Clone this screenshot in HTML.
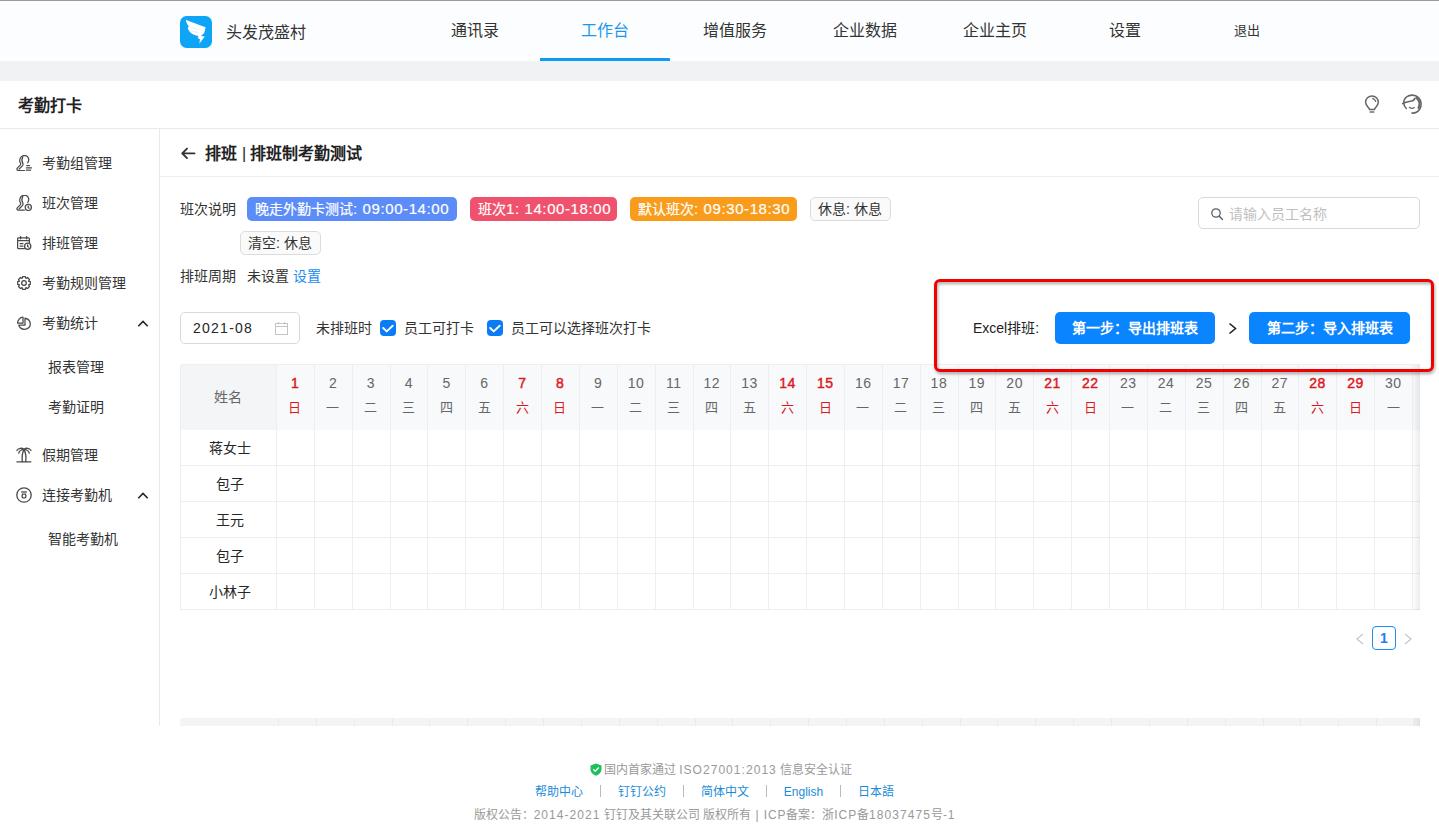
<!DOCTYPE html>
<html lang="zh-CN">
<head>
<meta charset="utf-8">
<style>
*{box-sizing:border-box;margin:0;padding:0}
html,body{width:1439px;height:837px;overflow:hidden;background:#fff}
body{position:relative;font-family:"Liberation Sans",sans-serif;color:#333;font-size:14px;white-space:nowrap}
.ic{position:absolute}
.abs{position:absolute;white-space:nowrap}
#topline{position:absolute;left:0;top:0;width:1439px;height:1px;background:#9a9a9a}
#hdr{position:absolute;left:0;top:1px;width:1439px;height:60px;background:#fcfdfe}
#band{position:absolute;left:0;top:61px;width:1439px;height:20px;background:#f1f2f4}
.nav{position:absolute;top:20px;font-size:16px;line-height:22px;color:#333;text-align:center;width:130px}
.nav.act{color:#1a97f0}
#navline{position:absolute;left:540px;top:58px;width:130px;height:3px;background:#0f9af5}
#orgname{position:absolute;left:226px;top:22px;font-size:16px;line-height:22px;color:#333}
#apptitle{position:absolute;left:18px;top:95px;font-size:16px;line-height:22px;font-weight:bold;color:#222}
#sep1{position:absolute;left:0;top:128px;width:1439px;height:1px;background:#e8e9eb}
#side{position:absolute;left:159px;top:129px;width:1px;height:597px;background:#e8e9eb}
.si{position:absolute;left:42px;font-size:14px;line-height:20px;color:#333}
.si2{position:absolute;left:48px;font-size:14px;line-height:20px;color:#333}
.caret{position:absolute;left:136px;width:12px;height:12px}
.sico{position:absolute;left:15px;width:18px;height:18px}
#ctitle{position:absolute;left:205px;top:143px;font-size:16px;line-height:22px;font-weight:bold;color:#222}
#sep2{position:absolute;left:160px;top:176px;width:1279px;height:1px;background:#eceef0}
.lbl{position:absolute;font-size:14px;line-height:20px;color:#333}
.d14{letter-spacing:.6px;font-size:15px}
.d12{letter-spacing:1.05px}
.e12{letter-spacing:.9px}
.tag{position:absolute;height:24px;border-radius:5px;font-size:14px;line-height:24px;color:#fff;padding:0 8px;-webkit-text-stroke:.2px #fff}
.tago{position:absolute;height:24px;border-radius:5px;font-size:14px;line-height:22px;color:#333;padding:0 7px;border:1px solid #dcdcdc;background:#fafafa}

#search{position:absolute;left:1198px;top:197px;width:222px;height:32px;border:1px solid #d9d9d9;border-radius:5px;background:#fff}
#search .ph{position:absolute;left:30px;top:6px;font-size:14px;line-height:20px;color:#bfbfbf}
#search svg{position:absolute;left:12px;top:10px}
#redbox{position:absolute;z-index:5;left:934px;top:279px;width:500px;height:93px;border:3px solid #f20000;border-radius:6px;filter:drop-shadow(1px 2px 1.5px rgba(0,0,0,.35))}
#datep{position:absolute;left:180px;top:312px;width:120px;height:32px;border:1px solid #d9d9d9;border-radius:5px;background:#fff}
#datep .v{position:absolute;left:12px;top:5px;font-size:14px;line-height:20px;color:#262626;letter-spacing:1.25px}
#datep svg{position:absolute;left:94px;top:9px}
.cb{position:absolute;top:320px;width:16px;height:16px;border-radius:4px;background:#0a7cf5}
.cb svg{position:absolute;left:2px;top:3px}
.btn{position:absolute;top:312px;height:32px;border-radius:5px;background:#0a84ff;color:#fff;font-size:14px;line-height:32px;text-align:center;font-weight:bold}
#tbl{position:absolute;left:180px;top:364px;width:1240px;height:246px;overflow:hidden;border-top-left-radius:4px}
#thbg{position:absolute;left:0;top:0;width:1240px;height:66px;background:#f8f9fa;border-top-left-radius:4px}
#thname{position:absolute;left:0;top:0;width:96px;height:66px;background:#f4f5f7;border-top-left-radius:4px;color:#666;font-size:14px;line-height:66px;text-align:center}
.dh{position:absolute;top:0;height:66px;text-align:center;color:#666;font-size:13px}
.dh .dn{position:absolute;left:0;right:0;top:10px;line-height:18px;font-size:14px;letter-spacing:.5px;text-indent:.5px}
.dh .dw{position:absolute;left:0;right:0;top:35px;line-height:18px}
.dh.red{color:#db1a1f}
.dh.red .dn{-webkit-text-stroke:.45px #db1a1f}
.vl{position:absolute;top:0;width:1px;height:246px;background:#eceef0}
.hl{position:absolute;left:0;width:1240px;height:1px;background:#eceef0}
#tblL{position:absolute;left:180px;top:364px;width:1240px;height:246px;border-top:1px solid #eceef0;border-left:1px solid #eceef0;border-top-left-radius:4px}
.nm{position:absolute;left:0;width:100px;height:36px;line-height:36px;text-align:center;font-size:14px;color:#262626}
#tshadow{position:absolute;left:1232px;top:0;width:8px;height:246px;background:linear-gradient(to right,rgba(0,0,0,0),rgba(0,0,0,.08))}
#strip{position:absolute;left:180px;top:718px;width:1240px;height:8px;background:#f3f4f6;overflow:hidden;border-top-left-radius:3px}
.vl2{position:absolute;top:0;width:1px;height:8px;background:#e9ebee;margin-left:1.5px}
#sshadow{position:absolute;left:1232px;top:0;width:8px;height:8px;background:linear-gradient(to right,rgba(0,0,0,0),rgba(0,0,0,.08))}
#pg1{position:absolute;left:1372px;top:626px;width:24px;height:24px;border:1px solid #1a8cf5;border-radius:4px;color:#1a7ff0;font-weight:bold;font-size:14px;line-height:22px;text-align:center}
.ft{position:absolute;left:0;width:1439px;text-align:center;font-size:12px;line-height:17px;color:#999}
.ft a{color:#1a8cd8;text-decoration:none}
.ft .sp{display:inline-block;width:1px;height:12px;background:#bbb;vertical-align:-1px;margin:0 17px}
</style>
</head>
<body>
<div id="topline"></div>
<div id="hdr"></div>
<div id="band"></div><div style="position:absolute;left:0;top:57px;width:1439px;height:4px;background:#fff"></div>
<svg id="logo" width="32" height="32" viewBox="0 0 32 32" style="position:absolute;left:180px;top:16px"><rect x="0" y="0" width="32" height="32" rx="6.5" fill="#0ea5f7"/><path d="M5.8 3.7 C12 6.3 19 8.8 25.7 11.3 L24.2 17 L21 19.9 L24.7 20.4 L19.4 27.8 L19.9 23.3 L17.8 22.1 L18.5 19.9 C15 19.5 12.5 18.5 11 17 C9.3 15.5 8 13.5 7.7 11.8 L8.9 10.4 C7.3 8.5 6.3 6.5 5.8 3.7 Z" fill="#fff"/><path d="M9 10.4 C12 11.5 15 12.5 18 13.5 M10.5 14.5 C13 15.5 16 16.2 19 16.8" stroke="#d5e9f7" stroke-width="0.7" fill="none"/></svg>
<div id="orgname">头发茂盛村</div>
<div class="nav" style="left:410px">通讯录</div>
<div class="nav act" style="left:540px">工作台</div>
<div class="nav" style="left:670px">增值服务</div>
<div class="nav" style="left:800px">企业数据</div>
<div class="nav" style="left:930px">企业主页</div>
<div class="nav" style="left:1060px">设置</div>
<div class="nav" style="left:1190px;width:114px;font-size:13px">退出</div>
<div id="navline"></div>


<svg class="ic" style="left:16px;top:155px" width="16" height="16" viewBox="0 0 16 16" fill="none" stroke="#4a4a4a" stroke-width="1.25" stroke-linecap="round"><path d="M8.6 15.5 H2.3 C0.9 15.5 0.5 13.9 1.5 12.9 L4.2 10.2 C4.7 9.6 4.8 8.7 4.4 8 C3.2 6 3.6 2.6 6 1.2 C8.3 0 11.5 0.5 12.4 3 C13 4.6 12.6 6.5 11.7 7.8"/><path d="M6.7 2 C5.8 3.6 5.8 6.6 6.9 8.6 C7.3 9.4 7 10.3 6.4 10.9 L3.2 14"/><path d="M10.8 10.5 H13.5 M10.4 12.9 H15.6 M10.4 15.2 H14.6"/></svg>
<svg class="ic" style="left:16px;top:195px" width="16" height="16" viewBox="0 0 16 16" fill="none" stroke="#4a4a4a" stroke-width="1.25" stroke-linecap="round"><path d="M8.3 15.2 H2.3 C0.9 15.2 0.5 13.6 1.5 12.6 L4.2 9.9 C4.7 9.3 4.8 8.4 4.4 7.7 C3.2 5.7 3.6 2.3 6 0.9 C8.3 -0.3 11.5 0.2 12.4 2.7 C13 4.3 12.6 6.2 11.7 7.5"/><path d="M6.7 1.7 C5.8 3.3 5.8 6.3 6.9 8.3 C7.3 9.1 7 10 6.4 10.6 L3.2 13.7"/><circle cx="12.3" cy="12.4" r="3.1"/><path d="M12.2 11.1 V12.6 L13.2 13.2"/></svg>
<svg class="ic" style="left:17px;top:236px" width="15" height="14" viewBox="0 0 15 14" fill="none" stroke="#4a4a4a" stroke-width="1.25" stroke-linecap="round"><path d="M7.5 12.6 H1.6 C1 12.6 0.6 12.2 0.6 11.6 V2.8 C0.6 2.2 1 1.8 1.6 1.8 H11.4 C12 1.8 12.4 2.2 12.4 2.8 V6.5"/><path d="M0.6 4.6 H12.4 M3.6 0.5 V2.8 M9.6 0.5 V2.8 M3 7.5 H6 M3 10 H6"/><circle cx="10.7" cy="10.2" r="3.1"/><path d="M10.6 8.8 V10.4 L11.6 11"/></svg>
<svg class="ic" style="left:17px;top:276px" width="14" height="14" viewBox="0 0 14 14" fill="none" stroke="#4a4a4a" stroke-width="1.25" stroke-linejoin="round"><path d="M5.6 0.7 H8.4 L8.9 2.4 L10.5 1.5 L12.5 3.5 L11.6 5.1 L13.3 5.6 V8.4 L11.6 8.9 L12.5 10.5 L10.5 12.5 L8.9 11.6 L8.4 13.3 H5.6 L5.1 11.6 L3.5 12.5 L1.5 10.5 L2.4 8.9 L0.7 8.4 V5.6 L2.4 5.1 L1.5 3.5 L3.5 1.5 L5.1 2.4 Z"/><circle cx="7" cy="7" r="2.3"/></svg>
<svg class="ic" style="left:17px;top:316px" width="14" height="14" viewBox="0 0 14 14" fill="none" stroke="#4a4a4a" stroke-width="1.25" stroke-linejoin="round"><path d="M6 1.2 V7.2 H0.6 C0.6 4 3 1.4 6 1.2 Z"/><path d="M8 2.2 C11 2.8 13.3 5.4 13.3 8.5 C13.3 11 10.8 13.3 7.5 13.3 C4.8 13.3 2.4 11.5 1.8 9 H8 Z"/></svg>
<svg class="ic" style="left:16px;top:447px" width="16" height="16" viewBox="0 0 16 16" fill="none" stroke="#4a4a4a" stroke-width="1.3" stroke-linecap="round"><path d="M0.9 14.8 H14.9"/><path d="M7.9 2.6 C6.5 5.5 5.8 10 6.3 14.6 M8.1 2.6 C9.6 5.5 10.3 10 9.7 14.6"/><path d="M8 2.5 C6 0.6 2.5 0.9 0.9 3.5 M8 2.5 C10 0.6 13.5 0.9 15 3.5 M7.8 2.7 C5.5 2.5 3.2 4 2.8 6.2 M8.2 2.7 C10.5 2.5 12.8 4 13.2 6.2"/></svg>
<svg class="ic" style="left:16px;top:487px" width="16" height="16" viewBox="0 0 16 16" fill="none" stroke="#4a4a4a" stroke-width="1.3"><circle cx="8" cy="8" r="7.2"/><path d="M5.2 5 H10.8"/><rect x="6.2" y="7.2" width="3.6" height="3.6" rx="0.8"/></svg>
<svg class="ic" style="left:137px;top:320px" width="12" height="8" viewBox="0 0 12 8" fill="none" stroke="#222" stroke-width="1.6"><path d="M1.3 6.2 L6 1.5 L10.7 6.2"/></svg>
<svg class="ic" style="left:137px;top:492px" width="12" height="8" viewBox="0 0 12 8" fill="none" stroke="#222" stroke-width="1.6"><path d="M1.3 6.2 L6 1.5 L10.7 6.2"/></svg>
<svg class="ic" style="left:180px;top:146px" width="16" height="14" viewBox="0 0 16 14" fill="none" stroke="#333" stroke-width="1.9" stroke-linecap="round" stroke-linejoin="round"><path d="M14.5 7.4 H2.5 M7 2.6 L2.2 7.4 L7 12.2"/></svg>
<svg class="ic" style="left:1364px;top:95px" width="16" height="19" viewBox="0 0 16 19" fill="none" stroke="#666" stroke-width="1.5"><path d="M5.6 14.6 C5.4 12.6 1.6 11.2 1.6 7.3 C1.6 3.8 4.5 1 8 1 C11.5 1 14.3 3.8 14.3 7.3 C14.3 11.2 10.6 12.6 10.4 14.6 Z" stroke-linejoin="round"/><path d="M5.6 17 H10.3" stroke-width="1.4"/><path d="M8.2 3.3 C10 3.7 11.4 5.1 11.8 7" stroke-width="1.2"/></svg>
<svg class="ic" style="left:1401px;top:94px" width="22" height="21" viewBox="0 0 22 21" fill="none" stroke="#666" stroke-width="1.6" stroke-linecap="round"><path d="M5.3 14.5 C2 11.5 1.8 6 5.5 3 C8.5 0.5 14 0.3 17.5 3.5 C20.5 6.5 21 12 18.5 15.5 C16.5 18.3 13.5 19.2 11 19.1"/><path d="M1.6 9.6 L2.8 8.9 C6 7.5 10 7.5 12.1 6.5 C13 6 13.5 5 13.9 4.3"/><path d="M15.5 4 C18.3 6.3 19.2 10.5 17.6 14" stroke-width="2.2"/><path d="M8.4 13.3 C9.8 14.6 12 14.6 13.3 13.6" stroke-width="1.2"/></svg>
<div id="apptitle">考勤打卡</div>
<div id="sep1"></div>
<div id="side"></div>

<div class="si" style="top:153px">考勤组管理</div>
<div class="si" style="top:193px">班次管理</div>
<div class="si" style="top:233px">排班管理</div>
<div class="si" style="top:273px">考勤规则管理</div>
<div class="si" style="top:313px">考勤统计</div>
<div class="si2" style="top:357px">报表管理</div>
<div class="si2" style="top:397px">考勤证明</div>
<div class="si" style="top:445px">假期管理</div>
<div class="si" style="top:485px">连接考勤机</div>
<div class="si2" style="top:529px">智能考勤机</div>

<div id="ctitle">排班<span style="font-weight:normal;margin:0 4px 0 5px">|</span>排班制考勤测试</div>
<div id="sep2"></div>

<div class="lbl" style="left:180px;top:199px">班次说明</div>
<div class="tag" style="left:247px;top:197px;width:210px;background:#5b8cf7">晚走外勤卡测试<span class="d14">: 09:00-14:00</span></div>
<div class="tag" style="left:470px;top:197px;width:147px;background:#f0516d">班次<span class="d14">1: 14:00-18:00</span></div>
<div class="tag" style="left:630px;top:197px;width:167px;background:#f99c1c">默认班次<span class="d14">: 09:30-18:30</span></div>
<div class="tago" style="left:810px;top:197px;width:81px">休息: 休息</div>
<div class="tago" style="left:240px;top:231px;width:81px">清空: 休息</div>
<div class="lbl" style="left:180px;top:266px">排班周期</div>
<div class="lbl" style="left:247px;top:266px">未设置 <span style="color:#1a8cf0">设置</span></div>


<div id="search"><svg width="13" height="13" viewBox="0 0 13 13"><circle cx="5" cy="5" r="4.2" fill="none" stroke="#595959" stroke-width="1.25"/><line x1="8.1" y1="8.1" x2="11.5" y2="11.5" stroke="#595959" stroke-width="1.35" stroke-linecap="round"/></svg><div class="ph">请输入员工名称</div></div>

<div id="datep"><div class="v">2021-08</div><svg width="14" height="13" viewBox="0 0 14 13"><rect x="0.5" y="1.5" width="12" height="11" fill="none" stroke="#c4c4c4" stroke-width="1"/><line x1="0.5" y1="4.5" x2="12.5" y2="4.5" stroke="#c4c4c4"/><line x1="3.5" y1="0" x2="3.5" y2="2.5" stroke="#c4c4c4"/><line x1="9.5" y1="0" x2="9.5" y2="2.5" stroke="#c4c4c4"/></svg></div>
<div class="lbl" style="left:316px;top:318px">未排班时</div>
<div class="cb" style="left:380px"><svg width="12" height="10" viewBox="0 0 12 10"><path d="M1.2 5 L4.7 8.4 L10.7 2.7" fill="none" stroke="#fff" stroke-width="1.9" stroke-linecap="round" stroke-linejoin="round"/></svg></div>
<div class="lbl" style="left:404px;top:318px">员工可打卡</div>
<div class="cb" style="left:487px"><svg width="12" height="10" viewBox="0 0 12 10"><path d="M1.2 5 L4.7 8.4 L10.7 2.7" fill="none" stroke="#fff" stroke-width="1.9" stroke-linecap="round" stroke-linejoin="round"/></svg></div>
<div class="lbl" style="left:511px;top:318px">员工可以选择班次打卡</div>

<div class="lbl" style="left:973px;top:318px;color:#222">Excel排班:</div>
<div class="btn" style="left:1055px;width:160px">第一步：导出排班表</div>
<svg style="position:absolute;left:1228px;top:322px" width="9" height="13" viewBox="0 0 9 13"><path d="M1.5 1.5 L7.5 6.5 L1.5 11.5" fill="none" stroke="#222" stroke-width="1.6"/></svg>
<div class="btn" style="left:1249px;width:161px">第二步：导入排班表</div>
<div id="redbox"></div>

<div id="tbl">
<div id="thbg"></div><div id="thname">姓名</div>
<div class="dh red" style="left:96.00px;width:37.87px"><div class="dn">1</div><div class="dw">日</div></div>
<div class="dh" style="left:133.87px;width:37.87px"><div class="dn">2</div><div class="dw">一</div></div>
<div class="dh" style="left:171.73px;width:37.87px"><div class="dn">3</div><div class="dw">二</div></div>
<div class="dh" style="left:209.60px;width:37.87px"><div class="dn">4</div><div class="dw">三</div></div>
<div class="dh" style="left:247.47px;width:37.87px"><div class="dn">5</div><div class="dw">四</div></div>
<div class="dh" style="left:285.33px;width:37.87px"><div class="dn">6</div><div class="dw">五</div></div>
<div class="dh red" style="left:323.20px;width:37.87px"><div class="dn">7</div><div class="dw">六</div></div>
<div class="dh red" style="left:361.07px;width:37.87px"><div class="dn">8</div><div class="dw">日</div></div>
<div class="dh" style="left:398.93px;width:37.87px"><div class="dn">9</div><div class="dw">一</div></div>
<div class="dh" style="left:436.80px;width:37.87px"><div class="dn">10</div><div class="dw">二</div></div>
<div class="dh" style="left:474.67px;width:37.87px"><div class="dn">11</div><div class="dw">三</div></div>
<div class="dh" style="left:512.53px;width:37.87px"><div class="dn">12</div><div class="dw">四</div></div>
<div class="dh" style="left:550.40px;width:37.87px"><div class="dn">13</div><div class="dw">五</div></div>
<div class="dh red" style="left:588.27px;width:37.87px"><div class="dn">14</div><div class="dw">六</div></div>
<div class="dh red" style="left:626.13px;width:37.87px"><div class="dn">15</div><div class="dw">日</div></div>
<div class="dh" style="left:664.00px;width:37.87px"><div class="dn">16</div><div class="dw">一</div></div>
<div class="dh" style="left:701.87px;width:37.87px"><div class="dn">17</div><div class="dw">二</div></div>
<div class="dh" style="left:739.73px;width:37.87px"><div class="dn">18</div><div class="dw">三</div></div>
<div class="dh" style="left:777.60px;width:37.87px"><div class="dn">19</div><div class="dw">四</div></div>
<div class="dh" style="left:815.47px;width:37.87px"><div class="dn">20</div><div class="dw">五</div></div>
<div class="dh red" style="left:853.33px;width:37.87px"><div class="dn">21</div><div class="dw">六</div></div>
<div class="dh red" style="left:891.20px;width:37.87px"><div class="dn">22</div><div class="dw">日</div></div>
<div class="dh" style="left:929.07px;width:37.87px"><div class="dn">23</div><div class="dw">一</div></div>
<div class="dh" style="left:966.93px;width:37.87px"><div class="dn">24</div><div class="dw">二</div></div>
<div class="dh" style="left:1004.80px;width:37.87px"><div class="dn">25</div><div class="dw">三</div></div>
<div class="dh" style="left:1042.67px;width:37.87px"><div class="dn">26</div><div class="dw">四</div></div>
<div class="dh" style="left:1080.53px;width:37.87px"><div class="dn">27</div><div class="dw">五</div></div>
<div class="dh red" style="left:1118.40px;width:37.87px"><div class="dn">28</div><div class="dw">六</div></div>
<div class="dh red" style="left:1156.27px;width:37.87px"><div class="dn">29</div><div class="dw">日</div></div>
<div class="dh" style="left:1194.13px;width:37.87px"><div class="dn">30</div><div class="dw">一</div></div>
<div class="dh" style="left:1232.00px;width:37.87px"><div class="dn">31</div><div class="dw">二</div></div>

<i class="hl" style="top:101px"></i>
<i class="hl" style="top:137px"></i>
<i class="hl" style="top:173px"></i>
<i class="hl" style="top:209px"></i>
<i class="hl" style="top:245px"></i>
<i class="vl" style="left:96px"></i>
<i class="vl" style="left:134px"></i>
<i class="vl" style="left:172px"></i>
<i class="vl" style="left:210px"></i>
<i class="vl" style="left:247px"></i>
<i class="vl" style="left:285px"></i>
<i class="vl" style="left:323px"></i>
<i class="vl" style="left:361px"></i>
<i class="vl" style="left:399px"></i>
<i class="vl" style="left:437px"></i>
<i class="vl" style="left:475px"></i>
<i class="vl" style="left:513px"></i>
<i class="vl" style="left:550px"></i>
<i class="vl" style="left:588px"></i>
<i class="vl" style="left:626px"></i>
<i class="vl" style="left:664px"></i>
<i class="vl" style="left:702px"></i>
<i class="vl" style="left:740px"></i>
<i class="vl" style="left:778px"></i>
<i class="vl" style="left:815px"></i>
<i class="vl" style="left:853px"></i>
<i class="vl" style="left:891px"></i>
<i class="vl" style="left:929px"></i>
<i class="vl" style="left:967px"></i>
<i class="vl" style="left:1005px"></i>
<i class="vl" style="left:1043px"></i>
<i class="vl" style="left:1081px"></i>
<i class="vl" style="left:1118px"></i>
<i class="vl" style="left:1156px"></i>
<i class="vl" style="left:1194px"></i>
<i class="vl" style="left:1232px"></i>
<div class="nm" style="top:66px">蒋女士</div>
<div class="nm" style="top:102px">包子</div>
<div class="nm" style="top:138px">王元</div>
<div class="nm" style="top:174px">包子</div>
<div class="nm" style="top:210px">小林子</div>
<div id="tshadow"></div>
</div>
<div id="tblL"></div>

<svg style="position:absolute;left:1355px;top:633px" width="10" height="12" viewBox="0 0 10 12"><path d="M8 1 L2 6 L8 11" fill="none" stroke="#c8c8c8" stroke-width="1.3"/></svg>
<div id="pg1">1</div>
<svg style="position:absolute;left:1403px;top:633px" width="10" height="12" viewBox="0 0 10 12"><path d="M2 1 L8 6 L2 11" fill="none" stroke="#c8c8c8" stroke-width="1.3"/></svg>

<div id="strip"><i class="vl2" style="left:96px"></i><i class="vl2" style="left:134px"></i><i class="vl2" style="left:172px"></i><i class="vl2" style="left:210px"></i><i class="vl2" style="left:247px"></i><i class="vl2" style="left:285px"></i><i class="vl2" style="left:323px"></i><i class="vl2" style="left:361px"></i><i class="vl2" style="left:399px"></i><i class="vl2" style="left:437px"></i><i class="vl2" style="left:475px"></i><i class="vl2" style="left:513px"></i><i class="vl2" style="left:550px"></i><i class="vl2" style="left:588px"></i><i class="vl2" style="left:626px"></i><i class="vl2" style="left:664px"></i><i class="vl2" style="left:702px"></i><i class="vl2" style="left:740px"></i><i class="vl2" style="left:778px"></i><i class="vl2" style="left:815px"></i><i class="vl2" style="left:853px"></i><i class="vl2" style="left:891px"></i><i class="vl2" style="left:929px"></i><i class="vl2" style="left:967px"></i><i class="vl2" style="left:1005px"></i><i class="vl2" style="left:1043px"></i><i class="vl2" style="left:1081px"></i><i class="vl2" style="left:1118px"></i><i class="vl2" style="left:1156px"></i><i class="vl2" style="left:1194px"></i><i class="vl2" style="left:1232px"></i><div id="sshadow"></div></div>

<div class="ft" style="top:761.5px;left:1.5px"><svg width="12" height="13" viewBox="0 0 12 13" style="vertical-align:-2px;margin-right:2px"><path d="M6 0.5 L11.5 2.5 V6.5 C11.5 9.5 9 11.5 6 12.8 C3 11.5 0.5 9.5 0.5 6.5 V2.5 Z" fill="#1cc05a"/><path d="M3.3 6.3 L5.2 8.2 L8.8 4.6" fill="none" stroke="#fff" stroke-width="1.4"/></svg><span id="f1">国内首家通过 <span class="d12">ISO27001:2013</span> 信息安全认证</span></div>
<div class="ft" style="top:784px;left:-5px"><span id="f2"><a>帮助中心</a><span class="sp"></span><a>钉钉公约</a><span class="sp"></span><a>简体中文</a><span class="sp"></span><a>English</a><span class="sp"></span><a>日本語</a></span></div>
<div class="ft" style="top:807px;left:-5px"><span id="f3">版权公告：<span class="d12">2014-2021</span> 钉钉及其关联公司 版权所有<span class="e12"> | ICP</span>备案：浙<span class="e12">ICP</span>备<span class="d12">18037475</span>号<span class="e12">-1</span></span></div>
</body>
</html>
